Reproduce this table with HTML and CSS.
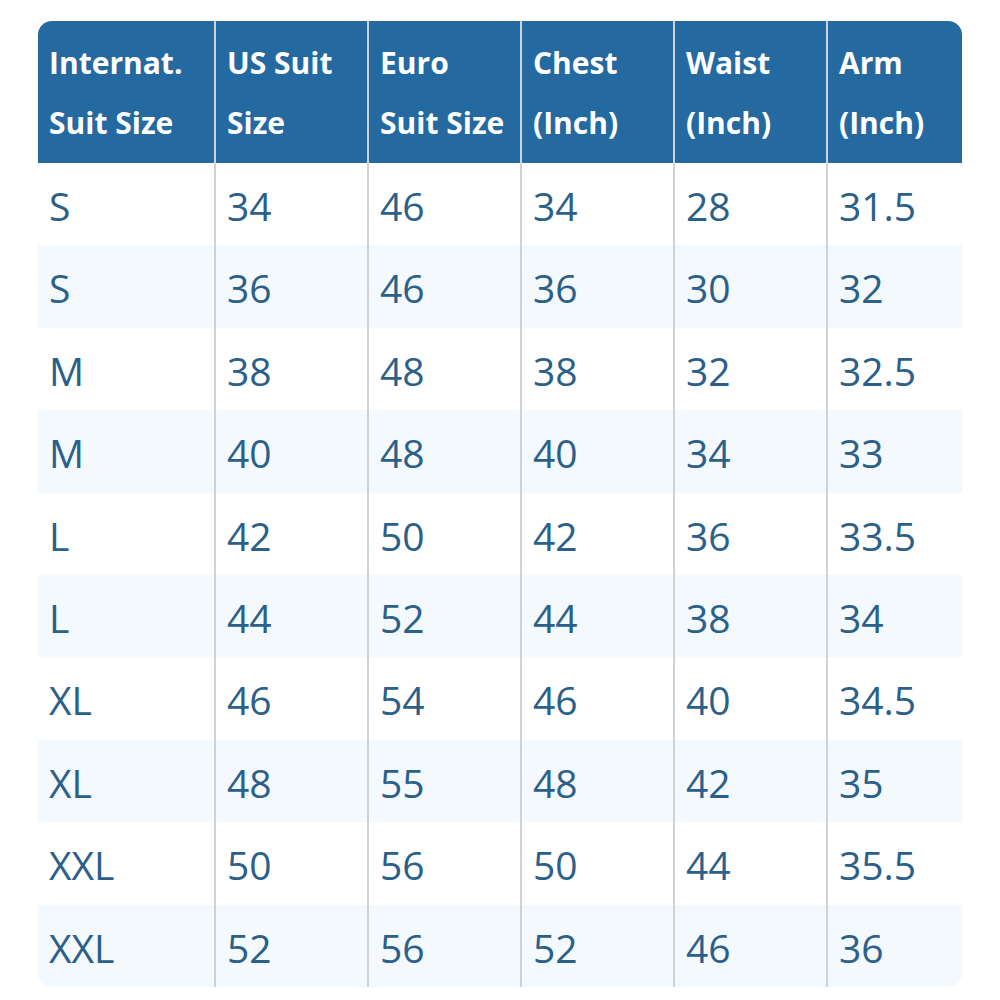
FILE: index.html
```html
<!DOCTYPE html>
<html>
<head>
<meta charset="utf-8">
<link rel="stylesheet" href="styles.css">
</head>
<body>
<div class="wrap">
<table class="sizes">
<colgroup>
<col class="c1"><col class="c2"><col class="c2"><col class="c2"><col class="c2"><col class="c6">
</colgroup>
<thead>
<tr><th>Internat.<br>Suit Size</th><th>US Suit<br>Size</th><th>Euro<br>Suit Size</th><th>Chest<br>(Inch)</th><th>Waist<br>(Inch)</th><th>Arm<br>(Inch)</th></tr>
</thead>
<tbody>
<tr><td>S</td><td>34</td><td>46</td><td>34</td><td>28</td><td>31.5</td></tr>
<tr><td>S</td><td>36</td><td>46</td><td>36</td><td>30</td><td>32</td></tr>
<tr><td>M</td><td>38</td><td>48</td><td>38</td><td>32</td><td>32.5</td></tr>
<tr><td>M</td><td>40</td><td>48</td><td>40</td><td>34</td><td>33</td></tr>
<tr><td>L</td><td>42</td><td>50</td><td>42</td><td>36</td><td>33.5</td></tr>
<tr><td>L</td><td>44</td><td>52</td><td>44</td><td>38</td><td>34</td></tr>
<tr><td>XL</td><td>46</td><td>54</td><td>46</td><td>40</td><td>34.5</td></tr>
<tr><td>XL</td><td>48</td><td>55</td><td>48</td><td>42</td><td>35</td></tr>
<tr><td>XXL</td><td>50</td><td>56</td><td>50</td><td>44</td><td>35.5</td></tr>
<tr><td>XXL</td><td>52</td><td>56</td><td>52</td><td>46</td><td>36</td></tr>
</tbody>
</table>
</div>
</body>
</html>
```
FILE: styles.css
```css
html, body {
  margin: 0;
  padding: 0;
  background: #ffffff;
}
.wrap {
  padding: 21px 38px;
}
.sizes {
  width: 924px;
  table-layout: fixed;
  border-collapse: separate;
  border-spacing: 0;
  border-radius: 14px;
  overflow: hidden;
  font-family: "Open Sans", "Noto Sans", sans-serif;
}
.c1 { width: 176px; }
.c2 { width: 153px; }
.c6 { width: 136px; }
.sizes th {
  background: #2469a0;
  color: #ffffff;
  font-weight: 700;
  font-size: 30px;
  line-height: 60px;
  text-align: left;
  vertical-align: top;
  padding: 12px 11px 10px;
  white-space: nowrap;
}
.sizes td {
  color: #2b6089;
  font-size: 39px;
  line-height: 79.4px;
  padding: 3px 11px 0;
  text-align: left;
  vertical-align: top;
}
.sizes th + th,
.sizes td + td {
  border-left: 2px solid #d0d3d6;
}
.sizes tbody tr:nth-child(even) td {
  background: #f3f9fd;
}
```
